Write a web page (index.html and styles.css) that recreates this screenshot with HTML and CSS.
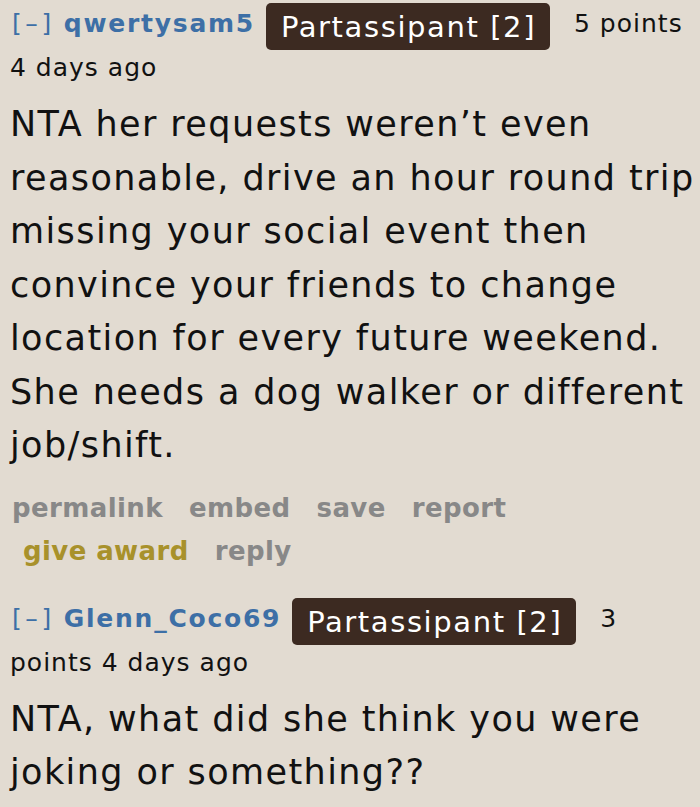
FILE: index.html
```html
<!DOCTYPE html>
<html>
<head>
<meta charset="utf-8">
<link rel="stylesheet" href="styles.css">
</head>
<body>
<div class="comment">
  <p class="tagline"><span class="expand">[–]</span> <a class="author">qwertysam5</a> <span class="flair">Partassipant [2]</span> <span class="score">5 points</span> <span class="time">4 days ago</span></p>
  <div class="md">NTA her requests weren’t even reasonable, drive an hour round trip missing your social event then convince your friends to change location for every future weekend. She needs a dog walker or different job/shift.</div>
  <ul class="buttons">
    <li>permalink</li>
    <li>embed</li>
    <li>save</li>
    <li>report</li>
    <li class="award">give award</li>
    <li>reply</li>
  </ul>
</div>
<div class="comment">
  <p class="tagline"><span class="expand">[–]</span> <a class="author">Glenn_Coco69</a> <span class="flair">Partassipant [2]</span> <span class="score">3 points</span> <span class="time">4 days ago</span></p>
  <div class="md">NTA, what did she think you were joking or something??</div>
</div>
</body>
</html>
```
FILE: styles.css
```css
html, body {
  margin: 0;
  background: #e2dbd1;
}
body {
  font-family: "DejaVu Sans", Verdana, sans-serif;
  color: #111;
  padding: 0 4px 0 10px;
}
.tagline {
  margin: 0;
  font-size: 25px;
  line-height: 36px;
  letter-spacing: 1px;
  padding-top: 3px;
}
.expand {
  color: #3d6fa6;
  padding-left: 2px;
  letter-spacing: 3.6px;
}
.author {
  color: #3d6fa6;
  font-weight: bold;
  letter-spacing: 1.75px;
}
.flair {
  display: inline-block;
  background: #3c2a21;
  color: #fff;
  font-size: 29px;
  letter-spacing: 1.6px;
  line-height: 45px;
  padding: 2px 14px 0 15px;
  border-radius: 5px;
  margin: 0 15px 0 2px;
  vertical-align: -5px;
}
.md {
  font-size: 35px;
  line-height: 53.5px;
  letter-spacing: 1.4px;
  margin-top: 12px;
}
.buttons {
  list-style: none;
  margin: 14px 0 0;
  padding: 0 0 0 2px;
  font-size: 26px;
  font-weight: bold;
  letter-spacing: 0.4px;
  color: #888;
  line-height: 43px;
  display: flex;
  flex-wrap: wrap;
  column-gap: 26px;
}
.buttons .award {
  color: #a8912b;
  margin-left: 11px;
}
.comment + .comment {
  margin-top: 22px;
}
```
